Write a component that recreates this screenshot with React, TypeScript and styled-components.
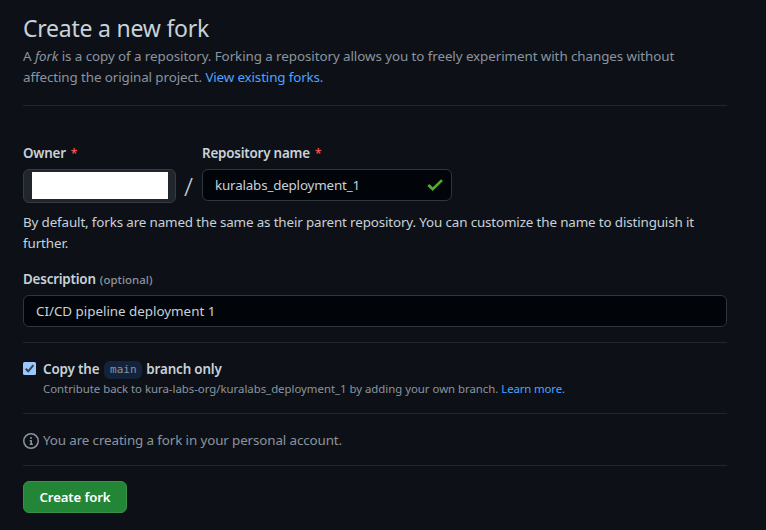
import React from "react";
import styled, { createGlobalStyle } from "styled-components";

const Global = createGlobalStyle`
  * { box-sizing: border-box; }
  html, body { margin: 0; background: #0d1117; }
  body {
    height: 530px;
    overflow: hidden;
    color: #c9d1d9;
    font-family: "Noto Sans", "Open Sans", sans-serif;
    font-size: 13.4px;
    line-height: 21px;
  }
`;

const Page = styled.main`
  display: flex;
  flex-direction: column;
  width: 727px;
  padding: 11px 0 0 23px;
`;

const Header = styled.header`
  height: 95px;
  border-bottom: 1px solid #21262d;
`;

const Title = styled.h1`
  margin: 0;
  height: 35px;
  font-size: 23px;
  font-weight: 400;
  line-height: 35px;
  letter-spacing: -0.23px;
`;

const Line = styled.div<{ $track?: number; $muted?: boolean }>`
  height: 21px;
  white-space: nowrap;
  letter-spacing: ${(p) => p.$track ?? 0}px;
  color: ${(p) => (p.$muted ? "#8b949e" : "#c9d1d9")};
`;

const Link = styled.a<{ $track?: number }>`
  color: #4ea2ff;
  text-decoration: none;
  letter-spacing: ${(p) => p.$track ?? 0}px;
`;

const NameRow = styled.div`
  display: flex;
  height: 69px;
  margin-top: 37px;
`;

const Field = styled.div<{ $width: number }>`
  display: flex;
  flex-direction: column;
  width: ${(p) => p.$width}px;
`;

const Label = styled.label`
  height: 26px;
  font-weight: 600;
  white-space: nowrap;
  letter-spacing: -0.2px;
`;

const Required = styled.span`
  margin-left: 5px;
  color: #f85149;
  font-size: 12px;
  line-height: 1;
`;

const Optional = styled.small`
  margin-left: 4px;
  color: #8b949e;
  font-size: 11.4px;
  font-weight: 500;
  letter-spacing: 0.05px;
`;

const OwnerButton = styled.button`
  display: flex;
  width: 153px;
  height: 34px;
  padding: 2px 7px 3px 8px;
  border: 1px solid #363b42;
  border-radius: 6px;
  background: #21262d;
`;

const OwnerName = styled.span`
  flex: 1;
  height: 27px;
  background: #fff;
`;

const Slash = styled.span`
  width: 26px;
  padding: 28px 0 0 8px;
  font-size: 26px;
  font-weight: 300;
  line-height: 30px;
`;

const InputBox = styled.div<{ $track?: number }>`
  display: flex;
  align-items: center;
  justify-content: space-between;
  flex: none;
  height: 32px;
  padding: 0 8px 0 12px;
  border: 1px solid #30363d;
  border-radius: 6px;
  background: #010409;
  letter-spacing: ${(p) => p.$track ?? 0}px;
`;

const DescriptionField = styled.section`
  display: flex;
  flex-direction: column;
  height: 74px;
  margin-top: 15px;
  border-bottom: 1px solid #21262d;
`;

const BranchRow = styled.section`
  display: flex;
  height: 71px;
  padding-top: 16px;
  border-bottom: 1px solid #21262d;
`;

const Checkbox = styled.span`
  display: flex;
  flex: none;
  width: 13px;
  height: 13px;
  margin: 3px 7px 0 0;
  border-radius: 1.5px;
  background: #99c8ff;
`;

const BranchTitle = styled.div`
  display: flex;
  align-items: center;
  height: 21px;
  font-weight: 600;
  white-space: nowrap;
  letter-spacing: -0.15px;
`;

const BranchName = styled.code`
  width: 38px;
  height: 18px;
  margin: 1px 4px 0 5px;
  border-radius: 6px;
  background: #12233b;
  color: #8b949e;
  font: 400 11px/18px "DejaVu Sans Mono", monospace;
  letter-spacing: 0;
  text-align: center;
`;

const BranchNote = styled.div`
  height: 18px;
  color: #8b949e;
  font-size: 11.4px;
  line-height: 18px;
  white-space: nowrap;
  letter-spacing: -0.02px;
`;

const Notice = styled.section`
  display: flex;
  height: 52px;
  padding-top: 16px;
  gap: 4px;
  border-bottom: 1px solid #21262d;
`;

const InfoIcon = styled.svg`
  width: 16px;
  height: 16px;
  margin-top: 3px;
  fill: #8b949e;
`;

const Submit = styled.button`
  width: 104px;
  height: 32px;
  margin-top: 15px;
  padding: 0;
  border: 1px solid #37914a;
  border-radius: 6px;
  background: #238636;
  color: #fff;
  font: 600 13.2px/20px "Noto Sans", sans-serif;
  letter-spacing: -0.12px;
`;

export default function App() {
  return (
    <>
      <Global />
      <Page>
        <Header>
          <Title>Create a new fork</Title>
          <Line $muted $track={-0.08}>
            A <em>fork</em> is a copy of a repository. Forking a repository allows you to freely experiment with changes without
          </Line>
          <Line $muted $track={-0.1}>
            affecting the original project. <Link $track={-0.14} href="#">View existing forks.</Link>
          </Line>
        </Header>

        <NameRow>
          <Field $width={153}>
            <Label>Owner<Required>*</Required></Label>
            <OwnerButton><OwnerName /></OwnerButton>
          </Field>
          <Slash>/</Slash>
          <Field $width={250}>
            <Label>Repository name<Required>*</Required></Label>
            <InputBox $track={-0.18}>
              kuralabs_deployment_1
              <svg width="16" height="16" viewBox="0 0 16 16">
                <path d="M1.3 8 5.7 12.1 15 3.1" fill="none" stroke="#57ab2f" strokeWidth="2.7" />
              </svg>
            </InputBox>
          </Field>
        </NameRow>

        <Line $track={-0.14}>By default, forks are named the same as their parent repository. You can customize the name to distinguish it</Line>
        <Line $track={-0.1}>further.</Line>

        <DescriptionField>
          <Label>Description<Optional>(optional)</Optional></Label>
          <InputBox $track={-0.02}>CI/CD pipeline deployment 1</InputBox>
        </DescriptionField>

        <BranchRow>
          <Checkbox>
            <svg width="13" height="13" viewBox="0 0 13 13">
              <path d="M2.7 6.8 5.2 9.3 10.4 3.2" fill="none" stroke="#3b4046" strokeWidth="2" />
            </svg>
          </Checkbox>
          <div>
            <BranchTitle>Copy the<BranchName>main</BranchName>branch only</BranchTitle>
            <BranchNote>
              Contribute back to kura-labs-org/kuralabs_deployment_1 by adding your own branch. <Link $track={-0.12} href="#">Learn more.</Link>
            </BranchNote>
          </div>
        </BranchRow>

        <Notice>
          <InfoIcon viewBox="0 0 16 16">
            <path d="M0 8a8 8 0 1 1 16 0A8 8 0 0 1 0 8Zm8-6.5a6.5 6.5 0 1 0 0 13 6.5 6.5 0 0 0 0-13ZM6.5 7.75A.75.75 0 0 1 7.25 7h1a.75.75 0 0 1 .75.75v2.75h.25a.75.75 0 0 1 0 1.5h-2a.75.75 0 0 1 0-1.5h.25v-2h-.25a.75.75 0 0 1-.75-.75ZM8 6a1 1 0 1 1 0-2 1 1 0 0 1 0 2Z" />
          </InfoIcon>
          <Line $muted $track={-0.12}>You are creating a fork in your personal account.</Line>
        </Notice>

        <Submit>Create fork</Submit>
      </Page>
    </>
  );
}
